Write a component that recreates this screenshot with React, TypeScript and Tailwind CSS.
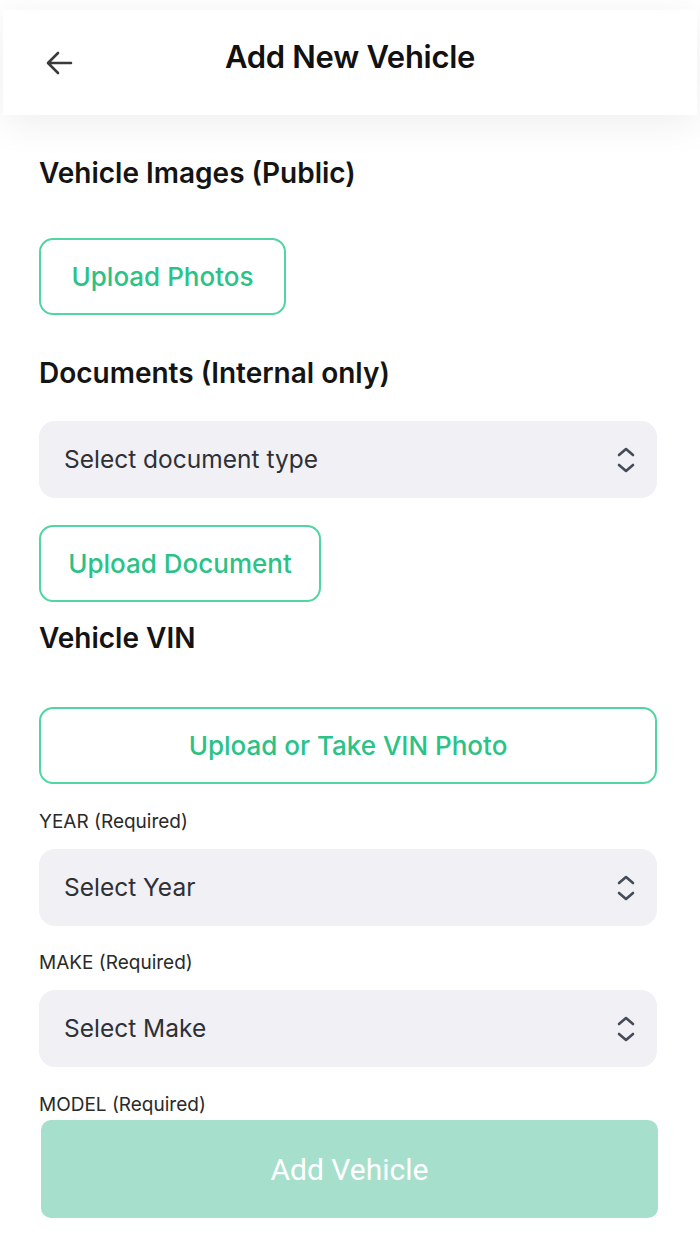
import React from "react";

const SelectChevrons = () => (
  <svg width="22" height="32" viewBox="0 0 22 32" fill="none">
    <path
      d="M4 11l7-6 7 6"
      stroke="#454b58"
      strokeWidth="2.6"
      strokeLinecap="round"
      strokeLinejoin="round"
    />
    <path
      d="M4 21l7 6 7-6"
      stroke="#454b58"
      strokeWidth="2.6"
      strokeLinecap="round"
      strokeLinejoin="round"
    />
  </svg>
);

interface SelectBoxProps {
  placeholder: string;
  className?: string;
}

const SelectBox: React.FC<SelectBoxProps> = ({ placeholder, className }) => (
  <div
    className={`flex h-[77px] items-center justify-between rounded-[16px] bg-[#f0f0f5] pl-[25px] pr-[20px] ${className ?? ""}`}
  >
    <span className="text-[24.5px] text-[#2f3035]">{placeholder}</span>
    <SelectChevrons />
  </div>
);

const OutlineButton: React.FC<{ label: string; className?: string }> = ({
  label,
  className,
}) => (
  <button
    className={`flex h-[77px] items-center justify-center rounded-[14px] border-2 border-[#4fd6a1] text-[26px] font-medium text-[#2bc286] ${className ?? ""}`}
  >
    {label}
  </button>
);

const FieldLabel: React.FC<{ text: string; className?: string }> = ({
  text,
  className,
}) => (
  <p className={`text-[19px] leading-[24px] text-[#2a2a2a] ${className ?? ""}`}>
    {text}
  </p>
);

const SectionTitle: React.FC<{ text: string; className?: string }> = ({
  text,
  className,
}) => (
  <h2
    className={`text-[28px] leading-[32px] font-semibold text-[#141414] ${className ?? ""}`}
  >
    {text}
  </h2>
);

export default function App() {
  return (
    <div className="relative h-[1244px] overflow-hidden bg-white font-['Inter',sans-serif]">
      <header className="mx-[3px] pt-[10px]">
        <div className="relative flex h-[105px] items-center justify-center bg-white shadow-[0_8px_40px_rgba(0,0,0,0.07)]">
          <button className="absolute left-[40px] top-[37px] text-[#3a3a3a]">
            <svg width="32" height="32" viewBox="0 0 32 32" fill="none">
              <path
                d="M28 16H6M15 6L5 16l10 10"
                stroke="currentColor"
                strokeWidth="2.6"
                strokeLinecap="round"
                strokeLinejoin="round"
              />
            </svg>
          </button>
          <h1 className="-mt-[10px] text-[31px] font-semibold tracking-[-0.3px] text-[#111]">
            Add New Vehicle
          </h1>
        </div>
      </header>

      <main className="flex flex-col pl-[39px] pr-[43px]">
        <SectionTitle text="Vehicle Images (Public)" className="mt-[42px]" />
        <OutlineButton label="Upload Photos" className="mt-[49px] w-[247px]" />

        <SectionTitle text="Documents (Internal only)" className="mt-[42px]" />
        <SelectBox placeholder="Select document type" className="mt-[32px]" />
        <OutlineButton
          label="Upload Document"
          className="mt-[27px] w-[282px]"
        />

        <SectionTitle text="Vehicle VIN" className="mt-[20px]" />
        <OutlineButton
          label="Upload or Take VIN Photo"
          className="mt-[53px] w-full"
        />

        <FieldLabel text="YEAR (Required)" className="mt-[26px]" />
        <SelectBox placeholder="Select Year" className="mt-[15px]" />

        <FieldLabel text="MAKE (Required)" className="mt-[25px]" />
        <SelectBox placeholder="Select Make" className="mt-[15px]" />

        <FieldLabel text="MODEL (Required)" className="mt-[26px]" />
        <SelectBox placeholder="Select Model" className="mt-[15px]" />
      </main>

      {/* sticky footer covers the rest of the form */}
      <div className="absolute inset-x-0 bottom-0 bg-white pb-[26px] pl-[41px] pr-[42px]">
        <button className="flex h-[98px] w-full items-center justify-center rounded-[10px] bg-[#a6e0cc] font-['Roboto',sans-serif] text-[30px] text-white">
          Add Vehicle
        </button>
      </div>
    </div>
  );
}
